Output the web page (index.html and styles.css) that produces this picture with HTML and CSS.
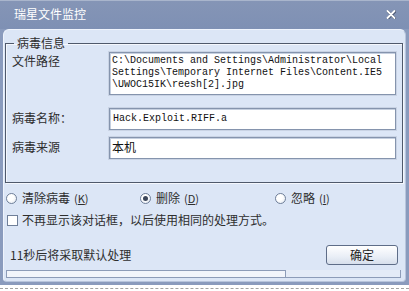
FILE: index.html
```html
<!DOCTYPE html>
<html lang="zh-CN">
<head>
    <meta charset="UTF-8">
    <title>瑞星文件监控</title>
    <link rel="stylesheet" href="styles.css">
</head>
<body>
    <div class="window">
        <div class="titlebar">
            <span class="title">瑞星文件监控</span>
            <svg class="close" width="10" height="9" viewBox="0 0 10 9">
                <path d="M1.5 1 L8.5 8 M8.5 1 L1.5 8" stroke="#4a5670" stroke-width="2.6" stroke-linecap="round" transform="translate(0.5 0.5)"/>
                <path d="M1.5 1 L8.5 8 M8.5 1 L1.5 8" stroke="#fff" stroke-width="1.8" stroke-linecap="round"/>
            </svg>
        </div>
        <div class="panel">
            <fieldset class="info">
                <legend>病毒信息</legend>
                <div class="rows">
                    <label class="lbl top">文件路径</label>
                    <div class="box path">C:\Documents and Settings\Administrator\Local<br>Settings\Temporary Internet Files\Content.IE5<br>\UWOC15IK\reesh[2].jpg</div>

                    <label class="lbl name-lbl">病毒名称：</label>
                    <div class="box field mono">Hack.Exploit.RIFF.a</div>

                    <label class="lbl">病毒来源</label>
                    <div class="box field src">本机</div>
                </div>
            </fieldset>

            <div class="options">
                <div class="opt"><span class="radio"></span>清除病毒 <span class="key">(<u>K</u>)</span></div>
                <div class="opt"><span class="radio on"></span>删除 <span class="key">(<u>D</u>)</span></div>
                <div class="opt"><span class="radio"></span>忽略 <span class="key">(<u>I</u>)</span></div>
            </div>

            <div class="check"><span class="checkbox"></span>不再显示该对话框，以后使用相同的处理方式。</div>

            <div class="footer">
                <span class="countdown">11秒后将采取默认处理</span>
                <button class="ok">确定</button>
            </div>

            <div class="progress"><div class="fill" style="width: 71%"></div></div>
        </div>
    </div>
    <div class="edge"></div>
</body>
</html>
```

FILE: styles.css
```css
* {
box-sizing: border-box;
margin: 0;
padding: 0;
}

body {
background: #ffffff;
font-family: "Noto Sans CJK SC", "Liberation Sans", sans-serif;
font-size: 12px;
color: #2e2e2e;
width: 409px;
height: 291px;
overflow: hidden;
}

.window {
width: 409px;
height: 285px;
background: #8a9bbd;
padding: 0 3px 3px 3px;
border-top: 1px solid #a9b5cc;
}

.titlebar {
height: 28px;
display: flex;
align-items: center;
justify-content: space-between;
padding: 0 10px 2px 11px;
background: linear-gradient(to bottom, #8595b6, #7e90b4);
margin: 0 -3px;
padding-left: 14px;
padding-right: 13px;
}

.title {
color: #ffffff;
font-size: 12px;
line-height: 16px;
}

.close {
display: block;
}

.panel {
height: 253px;
background: #dce6f6;
border-radius: 6px 6px 4px 4px;
border: 1px solid #eef3fc;
border-right-color: #b8c5dc;
border-bottom-color: #b8c5dc;
display: flex;
flex-direction: column;
}

.info {
margin: 5px 3px 0 1px;
border: 1px solid #4f596b;
box-shadow: 1px 1px 0 #f4f7fd, inset 1px 1px 0 #f4f7fd;
padding: 1px 6px 23px 6px;
height: 148px;
}

.info legend {
margin-left: 2px;
padding: 0 3px;
line-height: 16px;
color: #2e2e2e;
}

.rows {
display: grid;
grid-template-columns: 97px 287px;
grid-template-rows: 43px 22px 22px;
row-gap: 0;
align-items: center;
}

.rows .box:nth-of-type(2) {
margin-top: 13px;
}

.rows .lbl:nth-of-type(2) {
margin-top: 10px;
}

.rows .box:nth-of-type(3) {
margin-top: 7px;
}

.rows .lbl:nth-of-type(3) {
margin-top: 5px;
}

.rows {
grid-template-rows: 43px 35px 29px;
}

.lbl {
line-height: 16px;
}

.lbl.top {
align-self: start;
margin-top: 1px;
}

.box {
background: #ffffff;
border: 1px solid #8594ad;
box-shadow: inset 1px 1px 0 #c5cfdf, 0 0 0 1px #c9d3e4;
color: #111;
}

.path {
height: 43px;
padding: 2px 0 0 2px;
font-family: "Liberation Mono", monospace;
font-size: 10px;
line-height: 12px;
white-space: nowrap;
}

.field {
height: 22px;
padding: 0 2px;
line-height: 20px;
}

.field.mono {
font-family: "Liberation Mono", monospace;
font-size: 10px;
padding-left: 3px;
}

.field.src {
line-height: 18px;
}

.options {
margin-top: 7px;
height: 16px;
display: grid;
grid-template-columns: 134px 135px auto;
padding-left: 2px;
}

.opt {
display: flex;
align-items: center;
gap: 5px;
line-height: 16px;
}

.key {
font-size: 11px;
margin-left: -1px;
}

.key u {
text-underline-offset: 1px;
}

.radio {
width: 11px;
height: 11px;
border-radius: 50%;
border: 1px solid #6f7f99;
background: radial-gradient(circle at 35% 35%, #ffffff 40%, #dde4ee);
position: relative;
flex: none;
}

.radio.on::after {
content: "";
position: absolute;
left: 2px;
top: 2px;
width: 5px;
height: 5px;
border-radius: 50%;
background: #3b465a;
}

.check {
margin-top: 6px;
height: 16px;
display: flex;
align-items: center;
gap: 4px;
padding-left: 3px;
line-height: 16px;
}

.checkbox {
width: 11px;
height: 11px;
border: 1px solid #6f7f99;
background: #ffffff;
flex: none;
}

.footer {
margin-top: 17px;
height: 20px;
display: flex;
align-items: center;
justify-content: space-between;
padding: 0 7px 0 6px;
}

.countdown {
line-height: 16px;
}

.ok {
width: 72px;
height: 20px;
border: 1px solid #5e6d88;
border-radius: 3px;
background: linear-gradient(to bottom, #ffffff, #e9eef6 60%, #d7dfec);
font-family: "Noto Sans CJK SC", sans-serif;
font-size: 12px;
color: #222;
line-height: 16px;
}

.progress {
margin: 5px 4px 0 2px;
height: 8px;
border-right: 1px solid #8d9cb8;
border-bottom: 1px solid #8d9cb8;
background: #e4ebf7;
}

.fill {
height: 7px;
border: 1px solid #8d9cb8;
border-bottom: none;
background: #f2f5fb;
}

.edge {
height: 2px;
margin-top: 3px;
border-top: 1px dashed #a3a3a3;
}
```
